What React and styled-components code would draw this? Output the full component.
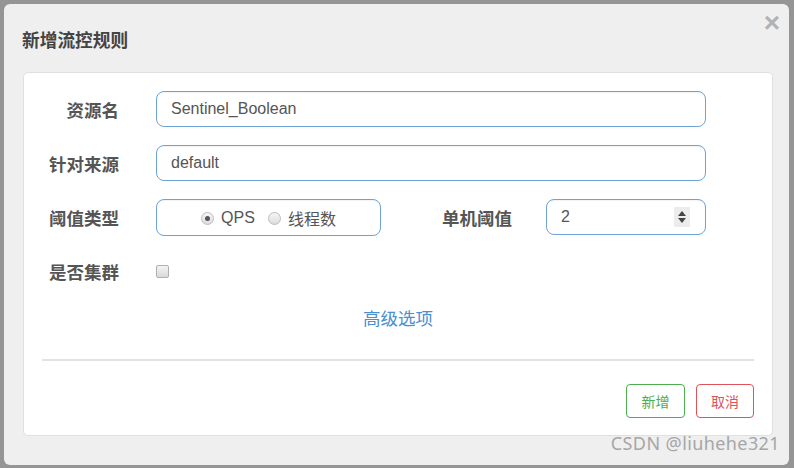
import React from 'react';
import styled, { createGlobalStyle } from 'styled-components';

const GlobalStyle = createGlobalStyle`
  html, body {
    margin: 0;
    padding: 0;
  }
  body {
    width: 794px;
    height: 468px;
    overflow: hidden;
    background: #959595;
    font-family: "Liberation Sans", "Noto Sans CJK SC", sans-serif;
  }
`;

const Page = styled.div`
  position: relative;
  box-sizing: border-box;
  width: 794px;
  height: 468px;
  padding: 4px 5px 3px 4px;
  display: flex;
`;

const Dialog = styled.div`
  flex: 1;
  display: flex;
  flex-direction: column;
  background: #efefef;
  border-radius: 6px;
`;

const Header = styled.div`
  height: 68px;
  display: flex;
  align-items: center;
  justify-content: space-between;
  padding: 0 9px 0 18px;
  box-sizing: border-box;
`;

const Title = styled.h4`
  margin: 0;
  font-family: "Noto Sans CJK SC", sans-serif;
  font-size: 17.7px;
  font-weight: 700;
  color: #444;
  padding-top: 2px;
`;

const Close = styled.span`
  align-self: flex-start;
  margin-top: 5px;
  font-family: "Liberation Sans", sans-serif;
  font-size: 28px;
  font-weight: 700;
  line-height: 1;
  color: #b2b2b2;
`;

const Panel = styled.div`
  margin: 0 16px 0 19px;
  height: 364px;
  box-sizing: border-box;
  background: #fff;
  border: 1px solid #e0e0e0;
  border-radius: 5px;
  padding: 18px 18px 17px 0;
  display: flex;
  flex-direction: column;
`;

const Form = styled.div`
  display: flex;
  flex-direction: column;
  gap: 18px;
  padding-right: 48px;
`;

const Row = styled.div`
  display: flex;
  align-items: center;
  height: 36px;
`;

const Label = styled.label`
  width: ${p => p.$width || 95}px;
  margin-left: ${p => p.$offset || 0}px;
  flex-shrink: 0;
  text-align: right;
  font-family: "Noto Sans CJK SC", sans-serif;
  font-size: 17.5px;
  font-weight: 700;
  color: #555;
`;

const Control = styled.div`
  margin-left: ${p => p.$gap || 37}px;
  flex: ${p => (p.$width ? '0 0 auto' : 1)};
  width: ${p => (p.$width ? `${p.$width}px` : 'auto')};
  display: flex;
  align-items: center;
`;

const Input = styled.div`
  position: relative;
  flex: 1;
  height: 36px;
  box-sizing: border-box;
  border: 1px solid #6ea3d6;
  border-radius: 8px;
  padding: 0 14px;
  display: flex;
  align-items: center;
  font-size: 16px;
  color: #555;
  box-shadow: inset 0 1px 1px rgba(0, 0, 0, 0.05);
`;

const RadioBox = styled(Input)`
  justify-content: center;
  gap: 13px;
  height: 37px;
  padding-top: 2px;
`;

const RadioItem = styled.span`
  display: inline-flex;
  align-items: center;
  gap: 7px;
  font-family: "Liberation Sans", "Noto Sans CJK SC", sans-serif;
  font-size: 16px;
  color: #555;
`;

const RadioDot = styled.span`
  width: 13px;
  height: 13px;
  border-radius: 50%;
  box-sizing: border-box;
  border: 1px solid #bcbcbc;
  background: linear-gradient(#f6f6f6, #dcdcdc);
  display: inline-flex;
  align-items: center;
  justify-content: center;
  &::after {
    content: '';
    width: 5px;
    height: 5px;
    border-radius: 50%;
    background: ${p => (p.$checked ? '#555' : 'transparent')};
  }
`;

const Spinner = styled.span`
  position: absolute;
  right: 15px;
  top: 7px;
  width: 16px;
  height: 20px;
  background: #ececec;
  display: flex;
  flex-direction: column;
  align-items: center;
  justify-content: center;
  gap: 2px;
`;

const Arrow = styled.span`
  width: 0;
  height: 0;
  border-left: 4px solid transparent;
  border-right: 4px solid transparent;
  border-${p => (p.$down ? 'top' : 'bottom')}: 5px solid #444;
`;

const Checkbox = styled.span`
  margin-left: 37px;
  margin-top: 1px;
  width: 13px;
  height: 13px;
  box-sizing: border-box;
  border: 1px solid #b0b0b0;
  border-radius: 2px;
  background: linear-gradient(#f4f4f4, #d9d9d9);
`;

const Advanced = styled.a`
  align-self: center;
  margin: 16px 0 0 18px;
  font-family: "Noto Sans CJK SC", sans-serif;
  font-size: 17.5px;
  color: #4a8fd0;
  text-decoration: none;
`;

const Divider = styled.hr`
  margin: 29px 0 0 18px;
  border: none;
  border-top: 2px solid #e3e3e3;
`;

const Actions = styled.div`
  margin-top: auto;
  display: flex;
  justify-content: flex-end;
  gap: 11px;
`;

const Button = styled.button`
  width: ${p => p.$w}px;
  height: 34px;
  background: #fff;
  border: 1px solid ${p => p.$color};
  border-radius: 4px;
  color: ${p => p.$color};
  font-family: "Noto Sans CJK SC", sans-serif;
  font-size: 14px;
  padding: 0;
`;

const Watermark = styled.span`
  position: absolute;
  right: 14px;
  bottom: 13px;
  font-family: "Noto Sans", sans-serif;
  font-size: 18px;
  color: #a6a6a6;
  letter-spacing: 0.4px;
`;

export default function App() {
  return (
    <>
      <GlobalStyle />
      <Page>
        <Dialog>
          <Header>
            <Title>新增流控规则</Title>
            <Close>×</Close>
          </Header>
          <Panel>
            <Form>
              <Row>
                <Label>资源名</Label>
                <Control>
                  <Input>Sentinel_Boolean</Input>
                </Control>
              </Row>
              <Row>
                <Label>针对来源</Label>
                <Control>
                  <Input>default</Input>
                </Control>
              </Row>
              <Row>
                <Label>阈值类型</Label>
                <Control $width={225}>
                  <RadioBox>
                    <RadioItem><RadioDot $checked />QPS</RadioItem>
                    <RadioItem><RadioDot />线程数</RadioItem>
                  </RadioBox>
                </Control>
                <Label $width={71} $offset={60}>单机阈值</Label>
                <Control $gap={34}>
                  <Input>
                    2
                    <Spinner>
                      <Arrow />
                      <Arrow $down />
                    </Spinner>
                  </Input>
                </Control>
              </Row>
              <Row>
                <Label>是否集群</Label>
                <Checkbox />
              </Row>
            </Form>
            <Advanced>高级选项</Advanced>
            <Divider />
            <Actions>
              <Button $w={59} $color="#4cae4c">新增</Button>
              <Button $w={58} $color="#e0525a">取消</Button>
            </Actions>
          </Panel>
        </Dialog>
        <Watermark>CSDN @liuhehe321</Watermark>
      </Page>
    </>
  );
}
